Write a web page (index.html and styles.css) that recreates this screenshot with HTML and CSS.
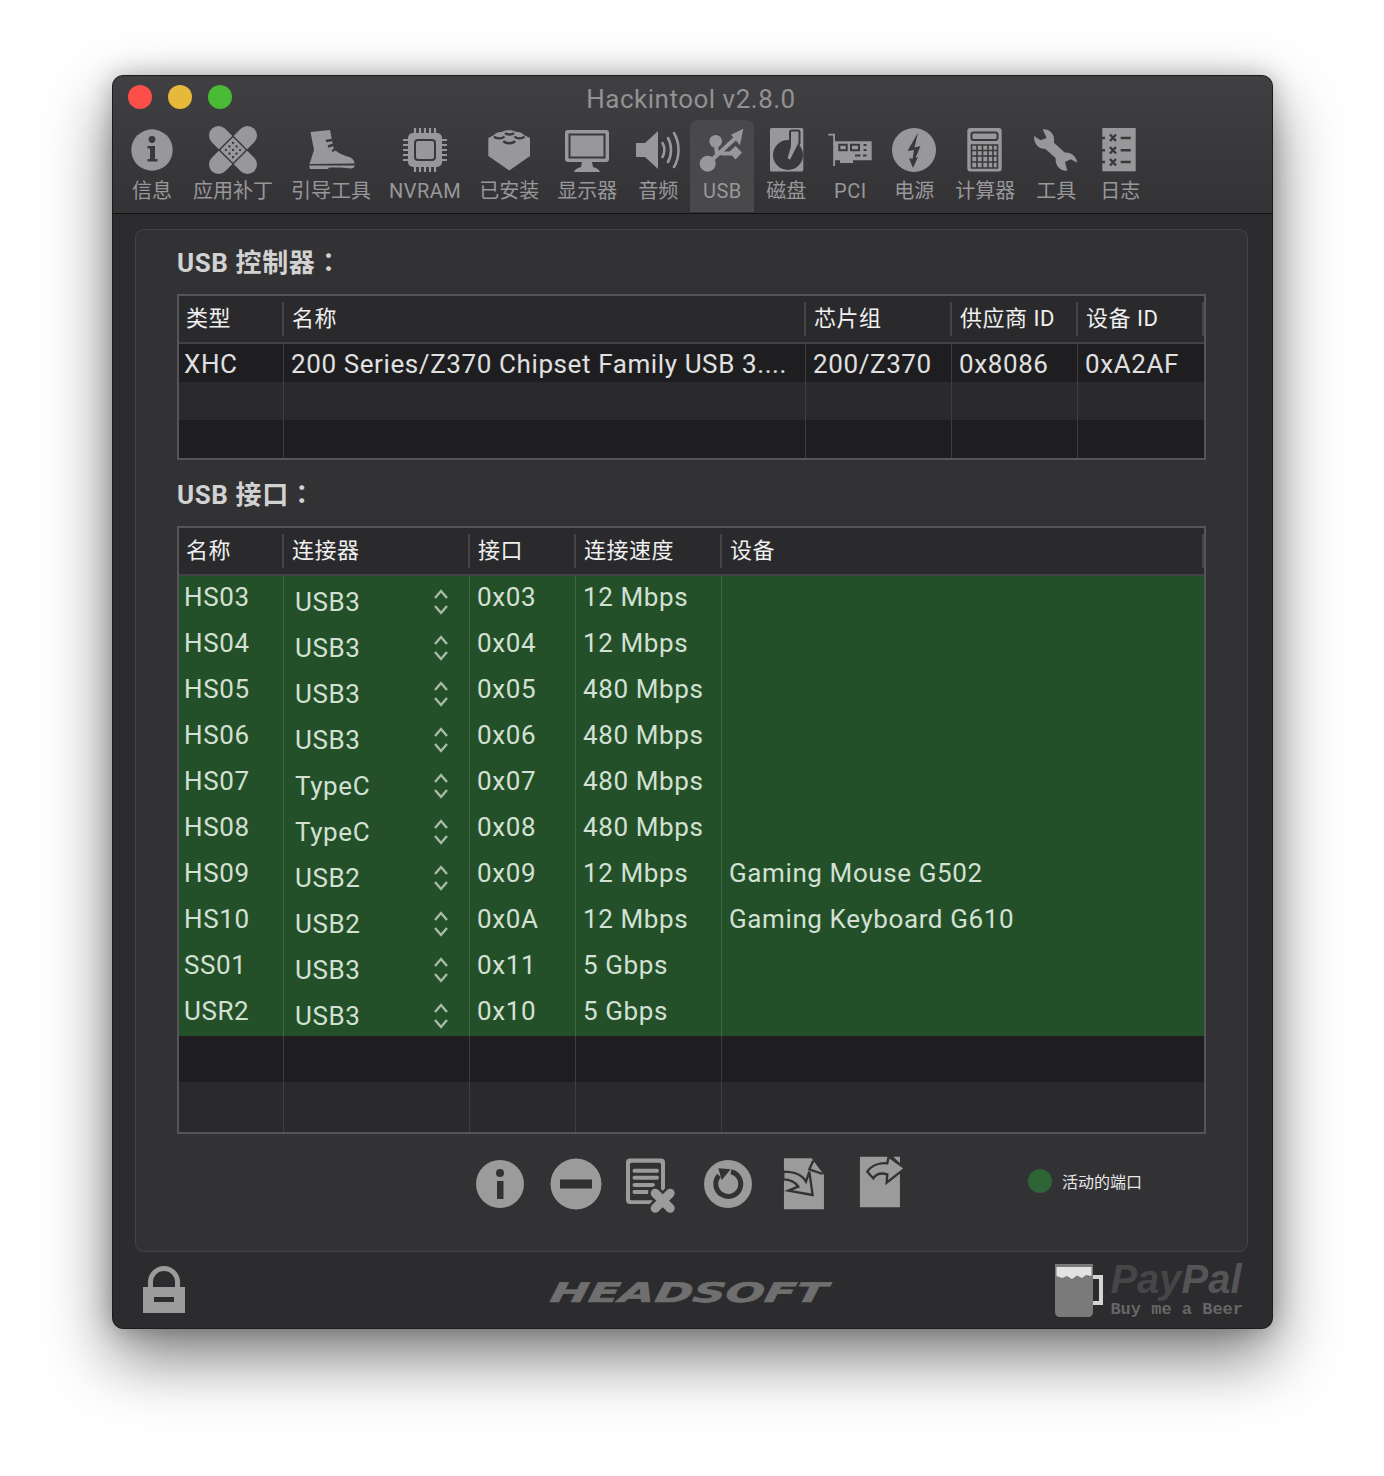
FILE: index.html
```html
<!DOCTYPE html>
<html>
  <head>
    <meta charset="utf-8" />
    <title>Hackintool</title>
    <link rel="stylesheet" href="styles.css">
  </head>
  <body>
    <svg class="defs" width="0" height="0">
      <symbol id="updown" viewBox="0 0 16 30">
        <path d="M2 11 L8 4 L14 11 M2 19 L8 26 L14 19" />
      </symbol>
    </svg>

    <div class="window">
      <div class="head">
        <div class="titlebar">
          <div class="lights">
            <span class="light red"></span>
            <span class="light yellow"></span>
            <span class="light green"></span>
          </div>
          <div class="title">Hackintool v2.8.0</div>
        </div>

        <div class="toolbar">
          <div class="tool">
            <svg class="tool_icon" viewBox="0 0 48 48">
              <circle cx="24" cy="24" r="20.7" />
              <circle class="cut" cx="24" cy="13.5" r="3.4" />
              <path class="cut" d="M19.5 20 H27 V33 H29.5 V35.5 H19.5 V33 H22 V22.5 H19.5 Z" />
            </svg>
            <span>信息</span>
          </div>
          <div class="tool">
            <svg class="tool_icon" viewBox="0 0 48 48">
              <g transform="rotate(45 24 24)">
                <rect x="-6" y="14.5" width="60" height="19" rx="9.5" />
                <rect x="14.5" y="-6" width="19" height="60" rx="9.5" />
                <rect class="cut" x="13.5" y="13.5" width="21" height="21" />
                <rect x="15" y="15" width="18" height="18" />
                <g class="cut">
                  <circle cx="19" cy="19" r="1.2" /><circle cx="24" cy="19" r="1.2" /><circle cx="29" cy="19" r="1.2" />
                  <circle cx="19" cy="24" r="1.2" /><circle cx="24" cy="24" r="1.2" /><circle cx="29" cy="24" r="1.2" />
                  <circle cx="19" cy="29" r="1.2" /><circle cx="24" cy="29" r="1.2" /><circle cx="29" cy="29" r="1.2" />
                </g>
              </g>
            </svg>
            <span>应用补丁</span>
          </div>
          <div class="tool">
            <svg class="tool_icon" viewBox="0 0 48 48">
              <path d="M3.5 6 L23 4 L26.5 22 C30 27 36 29 42 31 C46 32.5 47.5 35 47.5 37.5 L2.5 38 L7 24 Z" />
              <path d="M2 39.5 H48 C47.5 41.5 46 42.5 44 42.5 L34 41.5 L22 41.5 L21 43 H3 Z" />
              <path class="line thick" d="M19 15 L25 14 M21 20.5 L27 18.5 M25 25 L30 22.5" />
            </svg>
            <span>引导工具</span>
          </div>
          <div class="tool">
            <svg class="tool_icon" viewBox="0 0 48 48">
              <path class="pins" d="M14 2 V9 M19 2 V9 M24 2 V9 M29 2 V9 M34 2 V9 M14 39 V46 M19 39 V46 M24 39 V46 M29 39 V46 M34 39 V46 M2 14 H9 M2 19 H9 M2 24 H9 M2 29 H9 M2 34 H9 M39 14 H46 M39 19 H46 M39 24 H46 M39 29 H46 M39 34 H46" />
              <rect x="7" y="7" width="34" height="34" rx="5" />
              <rect class="cut" x="13" y="13" width="22" height="22" rx="4" />
              <rect x="15" y="15" width="18" height="18" rx="2" />
            </svg>
            <span class="latin">NVRAM</span>
          </div>
          <div class="tool">
            <svg class="tool_icon" viewBox="0 0 48 48">
              <path d="M3.3 12 L9 9 C11 6.5 14 6 17 6 C19 3.5 29 3.5 31 6 C34 6 37 6.5 39 9 L45 12 V30 L24.3 44.5 L3.3 30 Z" />
              <path class="line thick" d="M9 10.5 C11 13 17 13 19.5 10.5 M20 7 C22 9 27 9 29 7 M18.5 15 C20.5 18 28 18 30 15 M29.5 10.5 C32 13 37 13 39.5 10.5" />
            </svg>
            <span>已安装</span>
          </div>
          <div class="tool">
            <svg class="tool_icon" viewBox="0 0 48 48">
              <rect x="2" y="4" width="44" height="32" rx="3" />
              <rect class="cut" x="5.5" y="7.5" width="37" height="25" />
              <rect x="7.5" y="9.5" width="33" height="21" />
              <path d="M19 36 H29 L30 41 C33 42 36 43 37 46 H11 C12 43 15 42 18 41 Z" />
            </svg>
            <span>显示器</span>
          </div>
          <div class="tool">
            <svg class="tool_icon" viewBox="0 0 48 48">
              <path d="M2 17 H11 L24 5 V43 L11 31 H2 Z" />
              <path class="wave" d="M28.5 17 C31 21 31 27 28.5 31 M34 12 C38 19 38 29 34 36 M40 7 C46 17 46 31 40 41" />
            </svg>
            <span>音频</span>
          </div>
          <div class="tool selected">
            <svg class="tool_icon" viewBox="0 0 48 48">
              <path class="wave thick" d="M9.7 37.7 L38.7 11 M17.7 15.3 L19 29 M24 27.5 H37" />
              <path d="M45.3 2.7 L33 8.7 L42 19.3 Z" />
              <circle cx="9.7" cy="37.7" r="8" />
              <circle cx="17.7" cy="15.3" r="6.3" />
              <path d="M31 26 L37.5 20 L44 26.5 L37.5 33.5 Z" />
            </svg>
            <span class="latin">USB</span>
          </div>
          <div class="tool">
            <svg class="tool_icon" viewBox="0 0 48 48">
              <rect x="8" y="2" width="33.3" height="43.5" rx="1.5" />
              <circle class="cut" cx="26" cy="29" r="15" />
              <path class="arm" d="M28 6 C28 5 29 4.5 30 4.5 H36 C37 4.5 37.5 5 37.5 6 V17 L28.5 35 L24.5 32.5 L28 20 Z" />
            </svg>
            <span>磁盘</span>
          </div>
          <div class="tool">
            <svg class="tool_icon" viewBox="0 0 48 48">
              <path d="M2.3 7.7 H9 V40 H7.2 V9.5 H2.3 Z" />
              <path d="M8.5 15.3 H45.7 V34.3 H27 V37 H14 V34.3 H8.5 Z" />
              <g class="cut">
                <path d="M12.3 17.7 H21.7 V25.3 H12.3 Z M14.3 19.7 V23.3 H19.7 V19.7 Z M24 17.7 H34 V25.3 H24 Z M26 19.7 V23.3 H32 V19.7 Z" fill-rule="evenodd" />
                <rect x="37.5" y="18" width="3" height="2" /><rect x="37.5" y="23" width="3" height="2" />
                <rect x="29" y="28.5" width="5.5" height="2" /><rect x="37" y="28.5" width="3.5" height="2" />
              </g>
            </svg>
            <span class="latin">PCI</span>
          </div>
          <div class="tool">
            <svg class="tool_icon" viewBox="0 0 48 48">
              <circle cx="24" cy="24" r="22" />
              <path class="cut" d="M28 6.5 L17.5 25 L24 24 L22.5 33 L19 32 L23 42 L28 31 L25.5 32 L30.5 20 L24.5 21.5 Z" />
            </svg>
            <span>电源</span>
          </div>
          <div class="tool">
            <svg class="tool_icon" viewBox="0 0 48 48">
              <rect x="6.3" y="2" width="34.4" height="43.5" rx="3" />
              <rect class="screen" x="10.5" y="6.5" width="26" height="7.5" rx="2" />
              <path class="line" d="M10.5 19 H36.5 V42 H10.5 Z M10.5 24.5 H36.5 M10.5 30 H36.5 M10.5 36 H36.5 M16 19 V42 M21.5 19 V42 M27 19 V42 M32 19 V42" />
            </svg>
            <span>计算器</span>
          </div>
          <div class="tool">
            <svg class="tool_icon" viewBox="0 0 48 48">
              <g transform="translate(-102 -4) scale(0.3333)">
                <path d="M338 22 C355 20 372 32 372 52 L372 62 L405 92 C420 90 438 100 442 122 L422 112 L405 120 L412 146 C390 148 375 130 377 108 L345 80 C325 82 312 65 312 42 L332 55 L350 48 Z" />
              </g>
            </svg>
            <span>工具</span>
          </div>
          <div class="tool">
            <svg class="tool_icon" viewBox="0 0 48 48">
              <rect x="6.3" y="2" width="33.4" height="43.3" />
              <path class="line thick" d="M6 12 H9 M6 24.3 H9 M6 36 H9 M14 8.5 L20 15 M20 8.5 L14 15 M14 21 L20 27.5 M20 21 L14 27.5 M14 33 L20 39.5 M20 33 L14 39.5 M24.7 12 H34.7 M24.7 24.3 H34.7 M24.7 36 H34.7" />
            </svg>
            <span>日志</span>
          </div>
        </div>
      </div>

      <div class="content">
        <div class="panel">
          <h2>USB 控制器<span class="colon">：</span></h2>
          <div class="table controllers">
            <div class="row header">
              <div>类型</div><div>名称</div><div>芯片组</div><div>供应商 ID</div><div>设备 ID</div>
            </div>
            <div class="row dark">
              <div>XHC</div><div>200 Series/Z370 Chipset Family USB 3....</div><div>200/Z370</div><div>0x8086</div><div>0xA2AF</div>
            </div>
            <div class="row">
              <div></div><div></div><div></div><div></div><div></div>
            </div>
            <div class="row dark last">
              <div></div><div></div><div></div><div></div><div></div>
            </div>
          </div>

          <h2 class="second">USB 接口<span class="colon">：</span></h2>
          <div class="table ports">
            <div class="row header">
              <div>名称</div><div>连接器</div><div>接口</div><div>连接速度</div><div>设备</div>
            </div>
            <div class="row active">
              <div>HS03</div><div class="conn">USB3<svg class="updown"><use href="#updown" /></svg></div><div>0x03</div><div>12 Mbps</div><div></div>
            </div>
            <div class="row active">
              <div>HS04</div><div class="conn">USB3<svg class="updown"><use href="#updown" /></svg></div><div>0x04</div><div>12 Mbps</div><div></div>
            </div>
            <div class="row active">
              <div>HS05</div><div class="conn">USB3<svg class="updown"><use href="#updown" /></svg></div><div>0x05</div><div>480 Mbps</div><div></div>
            </div>
            <div class="row active">
              <div>HS06</div><div class="conn">USB3<svg class="updown"><use href="#updown" /></svg></div><div>0x06</div><div>480 Mbps</div><div></div>
            </div>
            <div class="row active">
              <div>HS07</div><div class="conn">TypeC<svg class="updown"><use href="#updown" /></svg></div><div>0x07</div><div>480 Mbps</div><div></div>
            </div>
            <div class="row active">
              <div>HS08</div><div class="conn">TypeC<svg class="updown"><use href="#updown" /></svg></div><div>0x08</div><div>480 Mbps</div><div></div>
            </div>
            <div class="row active">
              <div>HS09</div><div class="conn">USB2<svg class="updown"><use href="#updown" /></svg></div><div>0x09</div><div>12 Mbps</div><div>Gaming Mouse G502</div>
            </div>
            <div class="row active">
              <div>HS10</div><div class="conn">USB2<svg class="updown"><use href="#updown" /></svg></div><div>0x0A</div><div>12 Mbps</div><div>Gaming Keyboard G610</div>
            </div>
            <div class="row active">
              <div>SS01</div><div class="conn">USB3<svg class="updown"><use href="#updown" /></svg></div><div>0x11</div><div>5 Gbps</div><div></div>
            </div>
            <div class="row active">
              <div>USR2</div><div class="conn">USB3<svg class="updown"><use href="#updown" /></svg></div><div>0x10</div><div>5 Gbps</div><div></div>
            </div>
            <div class="row dark">
              <div></div><div></div><div></div><div></div><div></div>
            </div>
            <div class="row tall">
              <div></div><div></div><div></div><div></div><div></div>
            </div>
          </div>

          <div class="actions">
            <svg class="action" viewBox="0 0 54 60">
              <circle cx="27" cy="30" r="24" />
              <circle class="cut" cx="27" cy="19" r="4" />
              <rect class="cut" x="24" y="27" width="6.5" height="18" />
            </svg>
            <svg class="action" viewBox="0 0 54 60">
              <circle cx="27" cy="30" r="25.5" />
              <rect class="cut" x="11" y="25.5" width="32" height="9" />
            </svg>
            <svg class="action" viewBox="0 0 54 60">
              <rect x="1" y="4.5" width="39" height="45.5" rx="4" />
              <rect class="cut" x="5" y="8.7" width="31" height="37.5" rx="1.5" />
              <path class="bars" d="M9.5 16.7 H32 M9.5 23.7 H32 M9.5 31 H28 M9.5 38 H22" />
              <path class="x_back" d="M30.2 39.2 L45.2 54.2 M45.2 39.2 L30.2 54.2" />
              <path class="x_front" d="M30.2 39.2 L45.2 54.2 M45.2 39.2 L30.2 54.2" />
            </svg>
            <svg class="action" viewBox="0 0 54 60">
              <circle cx="27" cy="30" r="24" />
              <path class="ring" d="M30 17.7 A12.5 12.5 0 1 1 18 21.5" />
              <path class="cut" d="M17.3 14.3 L29.7 15.3 L20.7 26 Z" />
            </svg>
            <svg class="action" viewBox="0 0 54 60">
              <g transform="translate(-327 -14) scale(0.3333)">
                <path d="M1002 55 H1085 L1122 105 V208 H1002 Z" />
                <path class="outline" d="M1000 95 C1040 95 1060 110 1068 125 L1078 95 L1088 165 L1015 152 L1045 140 C1035 125 1020 118 1000 118 Z" />
                <path class="fold" d="M1090 62 L1078 88 L1118 102" />
              </g>
            </svg>
            <svg class="action" viewBox="0 0 54 60">
              <g transform="translate(-403 -14) scale(0.3333)">
                <path d="M1230 50 H1320 L1350 80 V202 H1230 Z" />
                <path d="M1330 50 H1350 V70 Z" />
                <path class="outline" d="M1252 95 C1265 75 1290 68 1312 70 L1316 50 L1365 85 L1310 128 L1312 103 C1295 98 1280 100 1270 115 Z" />
              </g>
            </svg>
            <div class="legend">
              <span class="legend_dot"></span>
              <span>活动的端口</span>
            </div>
          </div>
        </div>

        <div class="footer">
          <svg class="lock" viewBox="0 0 42 47">
            <path class="shackle" d="M7.5 22 V16 A13.5 13.5 0 0 1 34.5 16 V22" />
            <rect x="0" y="21" width="42" height="26" />
            <rect class="dark_cut" x="11" y="31" width="20" height="5" />
          </svg>
          <div class="logo">HEADSOFT</div>
          <div class="paypal">
            <svg class="mug" viewBox="0 0 48 53">
              <path class="mug_handle" d="M37 13 H46 V39 H37" />
              <path class="mug_body" d="M0 0 H38 V48 C38 51 36 53 33 53 H5 C2 53 0 51 0 48 Z" />
              <path class="mug_foam" d="M1.5 3 H36.5 V12 L31 11 L27 14 L22 11.5 L17 15 L12 12 L7 14 L1.5 12 Z" />
            </svg>
            <div class="paypal_text">
              <div class="paypal_name"><span>Pay</span><span class="pal">Pal</span></div>
              <div class="beer">Buy me a Beer</div>
            </div>
          </div>
        </div>
      </div>
    </div>
  </body>
</html>
```

FILE: styles.css
```css
body {
  margin: 0;
  height: 1476px;
  padding: 75px 0 0 112px;
  box-sizing: border-box;
  background-color: #ffffff;
  font-family: Roboto, "Noto Sans CJK SC", sans-serif;
  overflow: hidden;
}

.defs {
  position: absolute;
}

.window {
  width: 1161px;
  height: 1254px;
  box-sizing: border-box;
  border: 1px solid #1c1c1c;
  border-radius: 11px;
  background-color: #2c2c2e;
  box-shadow: 0 28px 66px rgba(0, 0, 0, 0.52), 0 0 24px rgba(0, 0, 0, 0.24);
  overflow: hidden;
}

.head {
  height: 137px;
  border-bottom: 1px solid #111111;
  background: linear-gradient(#404042, #333335);
}

.titlebar {
  position: relative;
  height: 44px;
  text-align: center;
}

.lights {
  position: absolute;
  top: 9px;
  left: 15px;
  display: flex;
  gap: 16px;
}

.light {
  width: 24px;
  height: 24px;
  border-radius: 50%;
}

.red {
  background-color: #fc4f4a;
}

.yellow {
  background-color: #e6b93a;
}

.green {
  background-color: #4ab935;
}

.title {
  padding: 6px 3px 0 0;
  font-size: 26px;
  line-height: 34px;
  letter-spacing: 0.5px;
  color: #929294;
}

.toolbar {
  display: flex;
  padding-left: 7px;
}

.tool {
  min-width: 64px;
  height: 92px;
  box-sizing: border-box;
  padding: 6px 9px 0;
  display: flex;
  flex-direction: column;
  align-items: center;
  font-size: 20px;
  line-height: 28px;
  color: #98989a;
  white-space: nowrap;
}

.latin {
  letter-spacing: 0.5px;
}

.selected {
  border-radius: 8px 8px 0 0;
  background-color: #49494b;
}

.tool_icon {
  display: block;
  flex: none;
  width: 48px;
  height: 48px;
  margin: 0 -1px 3px;
  fill: #98989a;
  overflow: visible;
}

.tool_icon .cut {
  fill: #39393b;
}

.selected .tool_icon .line {
  stroke: #49494b;
}

.pins,
.wave,
.bars,
.ring,
.shackle,
.x_back,
.x_front {
  fill: none;
}

.pins {
  stroke: #98989a;
  stroke-width: 2.2;
}

.wave {
  stroke: #98989a;
  stroke-width: 2.6;
  stroke-linecap: round;
}

.wave.thick {
  stroke-width: 4;
}

.line {
  fill: none;
  stroke: #39393b;
  stroke-width: 1.6;
}

.line.thick {
  stroke-width: 2.4;
}

.arm,
.screen {
  stroke: #39393b;
  stroke-width: 2;
}

.content {
  padding: 15px 24px 0 22px;
}

.panel {
  height: 1023px;
  box-sizing: border-box;
  padding: 16px 41px 0;
  border: 1px solid #444446;
  border-radius: 9px;
  background-color: #323234;
}

h2 {
  margin: 0 0 14px;
  font-size: 26px;
  line-height: 34px;
  font-weight: 700;
  letter-spacing: 0.6px;
  color: #d2d2d2;
}

h2.second {
  margin-top: 18px;
}

.colon {
  font-family: "Noto Sans CJK TC", sans-serif;
  line-height: 1;
}

.table {
  width: 1029px;
  box-sizing: border-box;
  border: 2px solid #555557;
  background-color: #2a2a2c;
}

.row {
  display: grid;
  height: 38px;
  font-size: 26px;
  line-height: 40px;
  letter-spacing: 0.6px;
  color: #e0e0e0;
  white-space: nowrap;
}

.controllers .row {
  grid-template-columns: 105px 522px 146px 126px 126px;
}

.ports .row {
  grid-template-columns: 105px 186px 106px 146px 482px;
  height: 46px;
  line-height: 43px;
}

.row > div {
  padding-left: 7px;
  border-right: 1px solid #3e3e40;
}

.row > div:first-child {
  padding-left: 5px;
}

.row > div:last-child {
  border-right: none;
}

.dark {
  background-color: #1e1e20;
}

.ports .tall {
  height: 50px;
}

.table .header {
  height: 48px;
  box-sizing: border-box;
  border-bottom: 2px solid #414143;
  background-color: #2a2a2c;
  font-size: 22px;
  letter-spacing: 0.5px;
  color: #f0f0f0;
}

.table .header > div {
  height: 34px;
  margin-top: 6px;
  padding-left: 8px;
  line-height: 33px;
  border-right: 2px solid #454547;
}

.table .header > div:first-child {
  padding-left: 7px;
}

.ports .active {
  background-color: #235029;
  color: #d3e0d3;
}

.active > div {
  border-right-color: #3d6743;
}

.row > .conn {
  display: flex;
  justify-content: space-between;
  padding: 5px 20px 0 11px;
}

.updown {
  width: 16px;
  height: 30px;
  margin-top: 6px;
  fill: none;
  stroke: #a7bba8;
  stroke-width: 2.4;
}

.actions {
  display: flex;
  gap: 22px;
  height: 60px;
  margin-top: 20px;
  padding-left: 296px;
}

.action {
  width: 54px;
  height: 60px;
  fill: #9b9b9b;
  overflow: visible;
}

.action .cut {
  fill: #323234;
}

.bars {
  stroke: #9b9b9b;
  stroke-width: 4;
  stroke-linecap: round;
}

.x_back {
  stroke: #323234;
  stroke-width: 14;
  stroke-linecap: round;
}

.x_front {
  stroke: #9b9b9b;
  stroke-width: 9;
  stroke-linecap: round;
}

.ring {
  stroke: #323234;
  stroke-width: 5;
}

.outline {
  stroke: #323234;
  stroke-width: 7;
}

.fold {
  fill: none;
  stroke: #323234;
  stroke-width: 7;
}

.legend {
  display: flex;
  align-items: center;
  gap: 10px;
  height: 54px;
  margin-left: 99px;
  font-size: 16px;
  color: #e8e8e8;
}

.legend_dot {
  width: 24px;
  height: 24px;
  border-radius: 50%;
  background-color: #2f6437;
}

.footer {
  display: grid;
  grid-template-columns: 1fr auto 1fr;
  align-items: center;
  height: 75px;
}

.lock {
  width: 42px;
  height: 47px;
  margin-left: 8px;
  fill: #9b9b9b;
}

.shackle {
  stroke: #9b9b9b;
  stroke-width: 5;
}

.dark_cut {
  fill: #2c2c2e;
}

.logo {
  margin-top: 6px;
  font-family: "DejaVu Sans", sans-serif;
  font-size: 27px;
  font-weight: 700;
  font-style: italic;
  line-height: 28px;
  color: #6f6f6f;
  -webkit-text-stroke: 0.6px #6f6f6f;
  transform: translateX(-3px) scaleX(1.69) skewX(-6deg);
}

.paypal {
  align-self: start;
  justify-self: end;
  display: flex;
  align-items: flex-start;
  gap: 7px;
  margin-top: 5px;
  padding-right: 5px;
}

.mug {
  width: 48px;
  height: 53px;
  margin-top: 7px;
  overflow: visible;
}

.mug_body {
  fill: #7a7a7a;
}

.mug_foam {
  fill: #e2e2e2;
}

.mug_handle {
  fill: none;
  stroke: #d4d4d4;
  stroke-width: 4;
}

.paypal_name {
  font-family: "Liberation Sans", sans-serif;
  font-size: 40px;
  font-weight: 700;
  font-style: italic;
  line-height: 45px;
  color: #464648;
}

.pal {
  color: #555557;
}

.beer {
  font-family: "Liberation Mono", monospace;
  font-size: 17px;
  line-height: 16px;
  font-weight: 700;
  color: #666666;
}
```
